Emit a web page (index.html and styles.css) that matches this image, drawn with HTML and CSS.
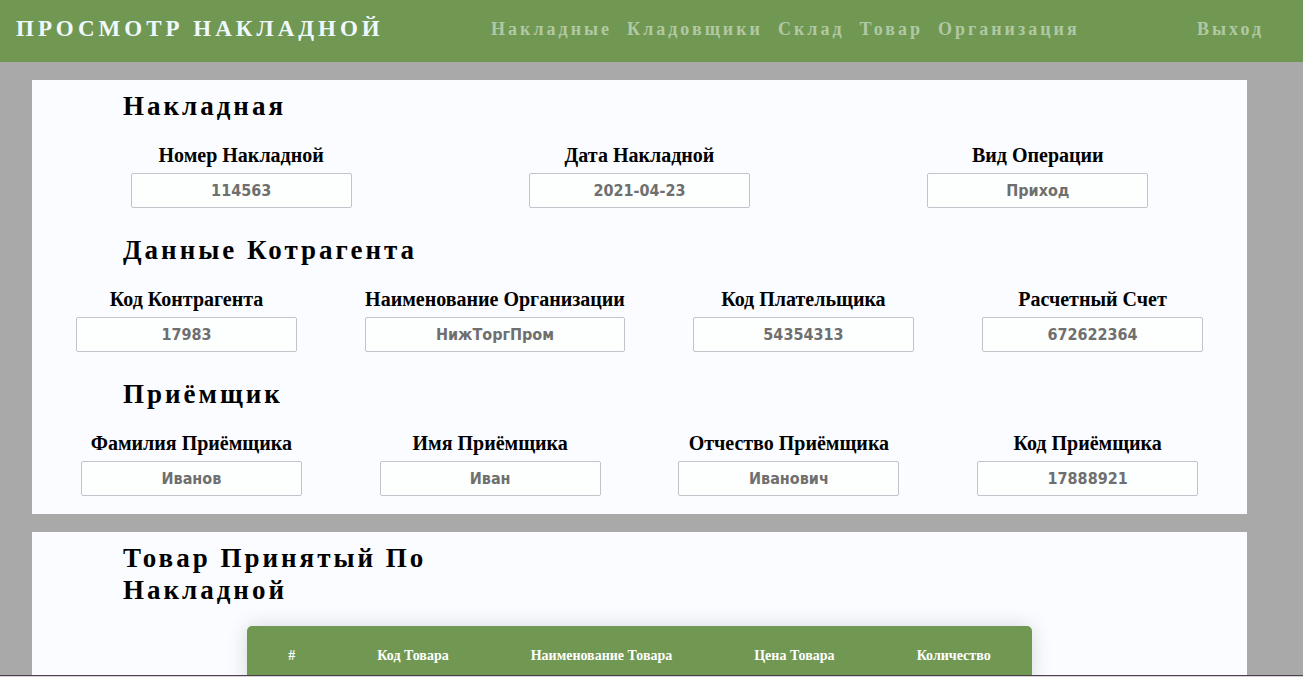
FILE: index.html
```html
<!DOCTYPE html>
<html lang="ru">
<head>
<meta charset="utf-8">
<title>Просмотр накладной</title>
<link rel="stylesheet" href="styles.css">
</head>
<body>
<header class="topbar">
  <h1 class="topbar-title">Просмотр накладной</h1>
  <nav class="nav">
    <a class="nav-link" href="#">Накладные</a>
    <a class="nav-link" href="#">Кладовщики</a>
    <a class="nav-link" href="#">Склад</a>
    <a class="nav-link" href="#">Товар</a>
    <a class="nav-link" href="#">Организация</a>
  </nav>
  <a class="nav-link" href="#">Выход</a>
</header>
<main class="content">
  <form class="panel">
    <h2 class="heading">Накладная</h2>
    <div class="fields">
      <div class="field"><label class="label" for="number">Номер Накладной</label><input class="input" id="number" placeholder="114563"></div>
      <div class="field"><label class="label" for="date">Дата Накладной</label><input class="input" id="date" placeholder="2021-04-23"></div>
      <div class="field"><label class="label" for="operation">Вид Операции</label><input class="input" id="operation" placeholder="Приход"></div>
    </div>
    <h2 class="heading">Данные Котрагента</h2>
    <div class="fields">
      <div class="field"><label class="label" for="agent">Код Контрагента</label><input class="input" id="agent" placeholder="17983"></div>
      <div class="field"><label class="label" for="company">Наименование Организации</label><input class="input" id="company" placeholder="НижТоргПром"></div>
      <div class="field"><label class="label" for="payer">Код Плательщика</label><input class="input" id="payer" placeholder="54354313"></div>
      <div class="field"><label class="label" for="account">Расчетный Счет</label><input class="input" id="account" placeholder="672622364"></div>
    </div>
    <h2 class="heading">Приёмщик</h2>
    <div class="fields">
      <div class="field"><label class="label" for="surname">Фамилия Приёмщика</label><input class="input" id="surname" placeholder="Иванов"></div>
      <div class="field"><label class="label" for="name">Имя Приёмщика</label><input class="input" id="name" placeholder="Иван"></div>
      <div class="field"><label class="label" for="patronymic">Отчество Приёмщика</label><input class="input" id="patronymic" placeholder="Иванович"></div>
      <div class="field"><label class="label" for="receiver">Код Приёмщика</label><input class="input" id="receiver" placeholder="17888921"></div>
    </div>
  </form>
  <section class="panel">
    <h2 class="heading">Товар Принятый По Накладной</h2>
    <table class="goods">
      <thead>
        <tr><th>#</th><th>Код Товара</th><th>Наименование Товара</th><th>Цена Товара</th><th>Количество</th></tr>
      </thead>
    </table>
  </section>
</main>
<div class="edge"></div>
</body>
</html>
```
FILE: styles.css
```css
* {
  box-sizing: border-box;
}

body {
  display: flex;
  flex-direction: column;
  height: 100vh;
  margin: 0;
  overflow: hidden;
  background: #a9a9a9;
  font-family: "Liberation Serif", "Times New Roman", serif;
}

.topbar {
  display: flex;
  flex: none;
  align-items: center;
  justify-content: space-between;
  padding: 16px 39px 20px 16px;
  background: #719852;
}

.topbar-title {
  margin: 0;
  color: #f0f8ff;
  font-size: 23px;
  line-height: 26px;
  letter-spacing: 4px;
  text-transform: uppercase;
}

.nav {
  display: flex;
  gap: 15px;
  margin-right: 10px;
}

.nav-link {
  color: #b0c9a4;
  font-size: 18px;
  font-weight: bold;
  line-height: 26px;
  letter-spacing: 3px;
  text-decoration: none;
}

.content {
  flex: 1;
  min-height: 0;
  padding: 18px 56px 0 32px;
  overflow: hidden;
}

.panel {
  margin-bottom: 18px;
  padding: 10px 10px 18px;
  background: #fbfcff;
}

.heading {
  max-width: 320px;
  margin: 0 0 22px 81px;
  font-size: 27px;
  line-height: 32px;
  letter-spacing: 3px;
}

.fields {
  display: flex;
  justify-content: space-around;
}

.fields + .heading {
  margin-top: 26px;
}

.field {
  display: flex;
  flex-direction: column;
  gap: 7px;
}

.label {
  font-size: 20px;
  font-weight: bold;
  line-height: 22px;
  text-align: center;
}

.input {
  width: 221px;
  min-width: 100%;
  height: 35px;
  padding: 0 10px;
  border: 1px solid #c3c4cb;
  border-radius: 2px;
  background: #fdfffe;
  font: bold 16px "DejaVu Sans Condensed", Tahoma, "DejaVu Sans", sans-serif;
  text-align: center;
}

.input::placeholder {
  color: #6f6f6f;
  opacity: 1;
}

.goods {
  margin: -2px auto 0;
  overflow: hidden;
  border-collapse: collapse;
  border-radius: 5px 5px 0 0;
  background: #719852;
  box-shadow: 0 0 20px rgba(0, 0, 0, 0.15);
  color: #fff;
  font-size: 14px;
  line-height: 16px;
}

.goods th {
  padding: 22px 41px;
}

.edge {
  flex: none;
  height: 2px;
  border-top: 1px solid #4b434c;
  background: #dccfdc;
}
```
